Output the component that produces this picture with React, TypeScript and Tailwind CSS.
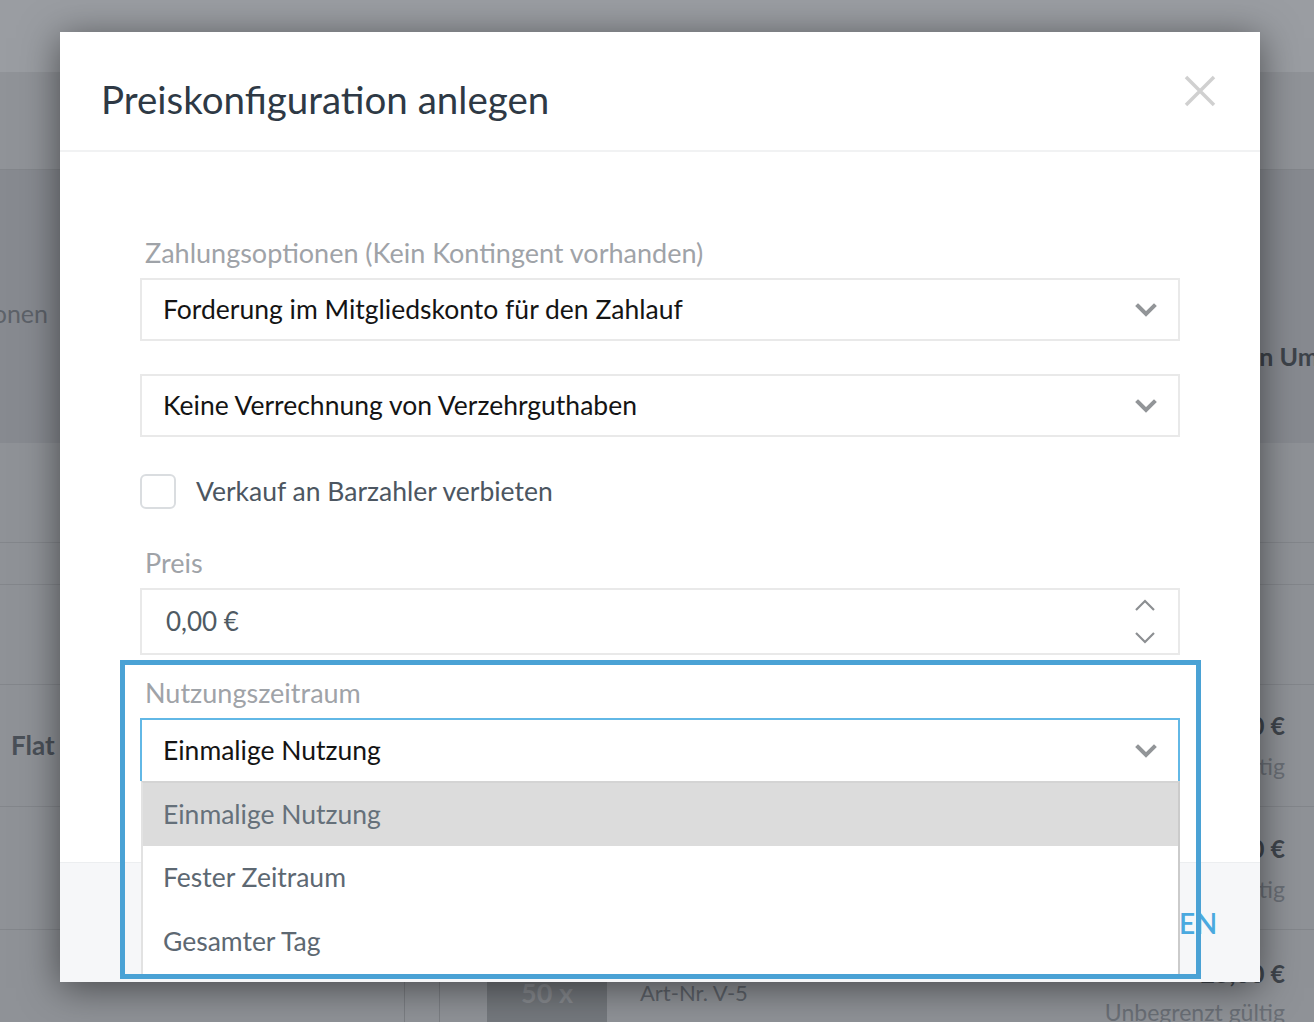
import { useState } from "react"

const options = ["Einmalige Nutzung", "Fester Zeitraum", "Gesamter Tag"]

function ChevronDown({ className = "" }: { className?: string }) {
  return (
    <svg className={className} width="22" height="14" viewBox="0 0 22 14" fill="none">
      <polyline points="3,3 11,11 19,3" stroke="currentColor" strokeWidth="4" strokeLinecap="square" />
    </svg>
  )
}

function SpinArrow({ up }: { up?: boolean }) {
  return (
    <svg width="22" height="13" viewBox="0 0 22 13" fill="none" className="text-[#8c8f92]">
      <polyline
        points={up ? "2,11 11,2 20,11" : "2,2 11,11 20,2"}
        stroke="currentColor"
        strokeWidth="2.2"
      />
    </svg>
  )
}

function Select({ value, active }: { value: string; active?: boolean }) {
  return (
    <div
      className={
        active
          ? "h-[63px] border-2 border-b-0 border-[#62b8e6] flex items-center justify-between pl-[21px] pr-[21px]"
          : "h-[63px] border-2 border-[#e9e9e9] flex items-center justify-between pl-[21px] pr-[21px]"
      }
    >
      <span className="text-[26.5px] text-[#141414]">{value}</span>
      <ChevronDown className="text-[#929598]" />
    </div>
  )
}

function Label({ children }: { children: React.ReactNode }) {
  return <div className="pl-[5px] h-[28px] leading-[28px] text-[27px] text-[#9fa3a8] mb-[11px]">{children}</div>
}

// dimmed page behind the dialog
function Backdrop() {
  return (
    <div className="flex flex-col text-[23px]">
      <div className="h-[72px] bg-[#9a9da2]" />
      <div className="h-[98px] bg-[#909398] border-b border-[#83868b]" />
      <div className="h-[273px] bg-[#878a90] flex justify-between text-[25px]">
        <div className="w-[48px] flex justify-end pt-[129px]">
          <span className="whitespace-nowrap text-[#5d6269] leading-[28px]">Positionen</span>
        </div>
        <div className="w-[122px] pt-[168px] overflow-hidden">
          <span className="whitespace-nowrap font-bold text-[#3d434a] leading-[28px]">Preis in Umsatz</span>
        </div>
      </div>
      <div className="h-[100px] border-b border-[#83868b]" />
      <div className="h-[42px] border-b border-[#83868b]" />
      <div className="h-[100px] border-b border-[#83868b]" />
      <div className="h-[122px] border-b border-[#83868b] flex items-center justify-between pl-[11px] pr-[29px]">
        <span className="font-bold text-[26px] text-[#4a5058]">Flat</span>
        <div className="flex flex-col items-end gap-[13px] leading-[28px]">
          <span className="font-bold text-[25px] text-[#3f454c]">19,00 €</span>
          <span className="text-[#6a6f76]">Unbegrenzt gültig</span>
        </div>
      </div>
      <div className="h-[123px] border-b border-[#83868b] flex items-center justify-end pr-[29px]">
        <div className="flex flex-col items-end gap-[13px] leading-[28px]">
          <span className="font-bold text-[25px] text-[#3f454c]">22,00 €</span>
          <span className="text-[#6a6f76]">Unbegrenzt gültig</span>
        </div>
      </div>
      <div className="h-[120px] flex">
        <div className="w-[404px]" />
        <div className="w-[36px] border-l border-r border-[#7b7e83]" />
        <div className="w-[47px]" />
        <div className="w-[120px] bg-[#74787d] flex justify-center pt-[49px]">
          <span className="font-bold text-[27px] text-[#888b90] leading-[28px]">50 x</span>
        </div>
        <div className="pl-[33px] pt-[49px] flex flex-col gap-[10px] leading-[28px] text-[#5e636a] text-[22px]">
          <span>Art-Nr. V-5</span>
          <span>Einmalige Nutzung</span>
        </div>
        <div className="flex-1 flex flex-col items-end pr-[29px] pt-[29px] gap-[11px] leading-[28px]">
          <span className="font-bold text-[25px] text-[#3f454c]">25,00 €</span>
          <span className="text-[#6a6f76]">Unbegrenzt gültig</span>
        </div>
      </div>
    </div>
  )
}

export default function App() {
  const [checked, setChecked] = useState(false)

  return (
    <div className="relative w-[1314px] h-[1022px] overflow-hidden bg-[#8f9297] font-['Lato','Liberation_Sans',sans-serif]">
      <Backdrop />

      <div className="absolute left-[60px] top-[32px] w-[1200px] h-[950px] bg-white shadow-[0_6px_36px_rgba(0,0,0,0.5)] flex flex-col">
        {/* header */}
        <div className="h-[120px] shrink-0 border-b-2 border-[#f1f2f3] flex items-center justify-between pl-[41px] pr-[44px]">
          <h1 className="mt-[16px] text-[38.5px] text-[#2e3945] leading-none">Preiskonfiguration anlegen</h1>
          <button className="w-[32px] h-[32px] text-[#d0d0d0]">
            <svg width="32" height="32" viewBox="0 0 32 32" fill="none">
              <path d="M2 2 L30 30 M30 2 L2 30" stroke="currentColor" strokeWidth="3.5" />
            </svg>
          </button>
        </div>

        {/* body */}
        <div className="px-[80px] pt-[87px] flex flex-col">
          <Label>Zahlungsoptionen (Kein Kontingent vorhanden)</Label>
          <Select value="Forderung im Mitgliedskonto für den Zahlauf" />
          <div className="mt-[33px]">
            <Select value="Keine Verrechnung von Verzehrguthaben" />
          </div>

          <label className="mt-[37px] h-[35px] flex items-center gap-[20px] cursor-pointer">
            <button
              onClick={() => setChecked(!checked)}
              className="w-[36px] h-[35px] shrink-0 rounded-[6px] border-2 border-[#dadde0] bg-white"
            />
            <span className="text-[26.5px] leading-[35px] text-[#4c5661]">Verkauf an Barzahler verbieten</span>
          </label>

          <div className="mt-[40px]">
            <Label>Preis</Label>
          </div>
          <div className="h-[67px] border-2 border-[#e9e9e9] flex items-center justify-between pl-[24px] pr-[22px]">
            <span className="text-[26px] text-[#4f5a63]">0,00 €</span>
            <div className="flex flex-col gap-[19px]">
              <SpinArrow up />
              <SpinArrow />
            </div>
          </div>

          <div className="mt-[24px]">
            <Label>Nutzungszeitraum</Label>
          </div>
          <div className="relative z-10">
            <Select value="Einmalige Nutzung" active />
            <ul className="absolute left-[1px] right-0 top-full border-t-2 border-l-2 border-r-2 border-t-[#d4d4d4] border-l-[#e2e2e2] border-r-[#cbcbcb] bg-white">
              {options.map((o, i) => (
                <li
                  key={o}
                  className={
                    i === 0
                      ? "h-[63px] flex items-center pl-[20px] text-[26.5px] text-[#65707a] bg-[#dcdcdc]"
                      : "h-[64px] flex items-center pl-[20px] text-[26.5px] text-[#5d6872]"
                  }
                >
                  {o}
                </li>
              ))}
            </ul>
          </div>
        </div>

        {/* footer */}
        <div className="mt-auto h-[120px] shrink-0 bg-[#f6f7f9] border-t border-[#eceef0] flex items-center justify-end pr-[42px]">
          <button className="text-[28px] font-semibold text-[#4aa9df] tracking-wide">ERSTELLEN</button>
        </div>

        {/* highlight frame around the period field */}
        <div className="absolute left-[60px] top-[628px] w-[1081px] h-[319px] border-[5px] border-[#4aa2d5] z-20 pointer-events-none" />
      </div>
    </div>
  )
}
